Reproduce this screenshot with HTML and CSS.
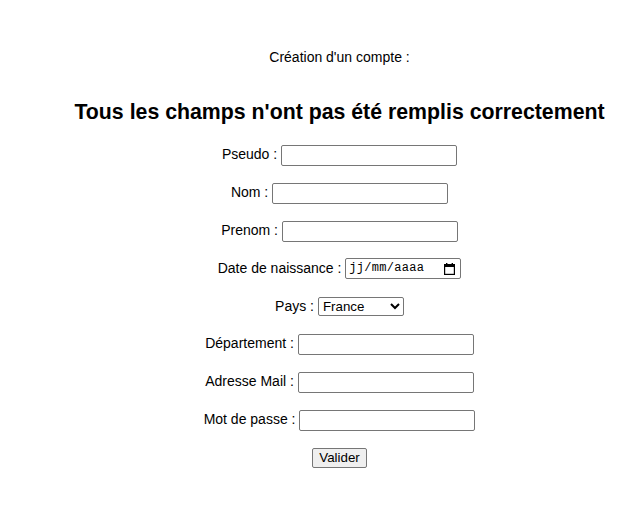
FILE: index.html
```html
<!DOCTYPE html>
<html lang="fr">
<head>
<meta charset="utf-8">
<title>Création d'un compte</title>
<link rel="stylesheet" href="styles.css">
</head>
<body>
<div class="page">
  <p class="intro">Création d'un compte :</p>
  <h2 class="error">Tous les champs n'ont pas été remplis correctement</h2>
  <form class="form">
    <p class="row"><label>Pseudo : <input type="text" class="field"></label></p>
    <p class="row"><label>Nom : <input type="text" class="field"></label></p>
    <p class="row"><label>Prenom : <input type="text" class="field"></label></p>
    <p class="row"><label>Date de naissance : <span class="date"><span class="date-text">jj/mm/aaaa</span><svg class="cal" width="11" height="12" viewBox="0 0 11 12"><rect x="0.6" y="1.6" width="9.8" height="9.8" fill="none" stroke="#000" stroke-width="1.2"/><rect x="0" y="1" width="11" height="3" fill="#000"/><rect x="2" y="0" width="1.4" height="2" fill="#000"/><rect x="7.6" y="0" width="1.4" height="2" fill="#000"/></svg></span></label></p>
    <p class="row"><label>Pays : <select class="select"><option>France</option></select></label></p>
    <p class="row"><label>Département : <input type="text" class="field"></label></p>
    <p class="row"><label>Adresse Mail : <input type="text" class="field"></label></p>
    <p class="row"><label>Mot de passe : <input type="password" class="field"></label></p>
    <p class="row"><button type="button" class="btn">Valider</button></p>
  </form>
</div>
</body>
</html>
```
FILE: styles.css
```css
body {
  margin: 8px;
  font-family: "Liberation Sans", Arial, sans-serif;
  font-size: 14px;
  color: #000;
  background: #fff;
}
.page {
  padding-left: 35px;
  text-align: center;
}
.intro {
  margin: 41px 0 0;
}
.error {
  font-size: 21.3px;
  font-weight: bold;
  margin: 35px 0 0;
}
.form {
  margin-top: 17px;
}
.row {
  margin: 13.9px 0;
  line-height: 24px;
}
.field {
  font-family: "Liberation Sans", Arial, sans-serif;
  font-size: 13.33px;
  width: 170px;
  height: 17px;
  padding: 1px 2px;
  border: 1px solid #767676;
  border-radius: 2px;
  vertical-align: middle;
  box-sizing: content-box;
}
.date {
  display: inline-flex;
  align-items: center;
  justify-content: space-between;
  width: 106px;
  height: 19px;
  padding: 0 5px 0 3px;
  border: 1px solid #767676;
  border-radius: 2px;
  vertical-align: middle;
  line-height: 19px;
  text-align: left;
}
.date-text {
  font-family: "Liberation Mono", "Courier New", monospace;
  font-size: 12px;
  letter-spacing: 0.3px;
}
.cal {
  display: block;
}
.select {
  font-family: "Liberation Sans", Arial, sans-serif;
  font-size: 13.33px;
  width: 86px;
  height: 19px;
  vertical-align: middle;
  border: 1px solid #767676;
  border-radius: 2px;
  background: #fff;
  color: #000;
}
.btn {
  font-family: "Liberation Sans", Arial, sans-serif;
  font-size: 13.33px;
  padding: 1px 6px;
  height: 20px;
  border: 1px solid #767676;
  border-radius: 2px;
  background: #efefef;
  color: #000;
}
```
